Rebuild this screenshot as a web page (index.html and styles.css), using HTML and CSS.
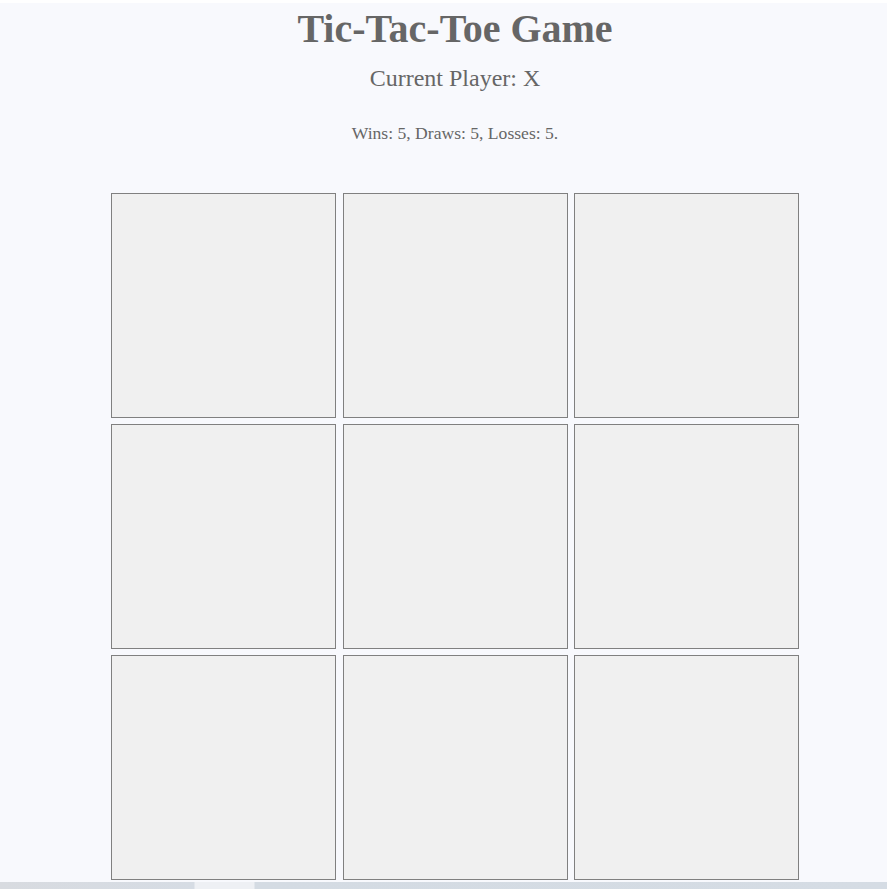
FILE: index.html
```html
<!DOCTYPE html>
<html lang="en">
<head>
<meta charset="utf-8">
<title>Tic-Tac-Toe Game</title>
<link rel="stylesheet" href="styles.css">
</head>
<body>
<div class="page">
  <h1 class="title">Tic-Tac-Toe Game</h1>
  <p class="player">Current Player: X</p>
  <p class="score">Wins: 5, Draws: 5, Losses: 5.</p>
  <div class="board">
    <div class="cell"></div>
    <div class="cell"></div>
    <div class="cell"></div>
    <div class="cell"></div>
    <div class="cell"></div>
    <div class="cell"></div>
    <div class="cell"></div>
    <div class="cell"></div>
    <div class="cell"></div>
  </div>
  <div class="strip"></div>
</div>
</body>
</html>
```
FILE: styles.css
```css
html, body {
  margin: 0;
  padding: 0;
  background: #ffffff;
}
body {
  overflow: hidden;
  height: 889px;
}
.page {
  margin-top: 3px;
  padding-top: 3px;
  background: #f8f9fd;
  font-family: "Liberation Serif", "Times New Roman", serif;
  color: #666666;
  display: flex;
  flex-direction: column;
  align-items: center;
  padding-left: 23px;
  min-height: 883px;
}
.title {
  margin: 0;
  font-size: 40px;
  font-weight: bold;
  line-height: 46px;
}
.player {
  margin: 12px 0 0;
  font-size: 24px;
  line-height: 28px;
}
.score {
  margin: 31px 0 0;
  font-size: 17.6px;
  line-height: 20px;
}
.board {
  margin-top: 50px;
  display: grid;
  grid-template-columns: repeat(3, 225px);
  grid-auto-rows: 225px;
  column-gap: 6.6px;
  row-gap: 6px;
}
.cell {
  box-sizing: border-box;
  background: #f0f0f0;
  border: 1px solid #808080;
}
.strip {
  align-self: stretch;
  margin-left: -23px;
  margin-top: 2px;
  height: 7px;
  background: linear-gradient(90deg, #d8dbe0 0px, #d6dce4 194px, #eef0f4 195px, #eef0f4 254px, #d4dbe3 255px, #d5dce4 887px);
}
```
